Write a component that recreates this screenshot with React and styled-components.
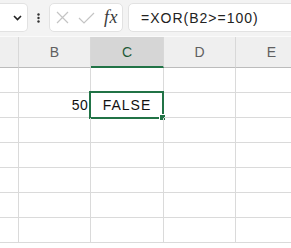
import { createGlobalStyle, styled } from "styled-components";

const GlobalStyle = createGlobalStyle`
  html, body {
    margin: 0;
    padding: 0;
    background: #ffffff;
    overflow: hidden;
  }
  body {
    font-family: "Liberation Sans", Arial, sans-serif;
  }
`;

const GREEN = "#217346";

const Page = styled.div`
  width: 291px;
  height: 248px;
  overflow: hidden;
  background: #fff;
`;

const Toolbar = styled.div`
  height: 37px;
  box-sizing: border-box;
  background: #f3f3f3;
  display: flex;
  align-items: center;
  padding-bottom: 1px;
  border-bottom: 1px solid #fafafa;
`;

const Box = styled.div`
  height: 29px;
  box-sizing: border-box;
  background: #fff;
  border: 1px solid #e2e2e2;
  border-radius: 5px;
  display: flex;
  align-items: center;
`;

const NameBox = styled(Box)`
  width: 28px;
  border-left: none;
  border-radius: 0 5px 5px 0;
  justify-content: flex-end;
  padding-right: 5px;
`;

const Dots = styled.div`
  width: 21px;
  display: flex;
  justify-content: center;
  color: #333;
`;

const EditBox = styled(Box)`
  width: 74px;
  padding-left: 6px;
  gap: 9px;
`;

const Fx = styled.span`
  font-family: "Liberation Serif", "Times New Roman", serif;
  font-style: italic;
  font-size: 18px;
  color: #3b3b3b;
  letter-spacing: 0.5px;
`;

const FormulaBox = styled(Box)`
  flex: 1;
  margin-left: 5px;
  margin-right: -10px;
  padding-left: 12px;
  font-size: 14px;
  color: #222;
  letter-spacing: 1px;
  border-radius: 5px 0 0 5px;
`;

const Sheet = styled.div`
  display: grid;
  grid-template-columns: 19px 72px 73px 72px 72px;
`;

const HeadCell = styled.div`
  height: 31px;
  box-sizing: border-box;
  background: ${(p) => (p.$active ? "#d6d6d6" : "#efefef")};
  border-right: 1px solid #d8d8d8;
  border-bottom: ${(p) => (p.$active ? `2px solid ${GREEN}` : "1px solid #bcbcbc")};
  display: flex;
  align-items: center;
  justify-content: center;
  font-size: 14px;
  color: ${(p) => (p.$active ? "#1f5a38" : "#606060")};
  padding-top: ${(p) => (p.$active ? "1px" : "0")};
`;

const Cell = styled.div`
  position: relative;
  height: 25px;
  box-sizing: border-box;
  border-right: 1px solid #dadada;
  border-bottom: 1px solid #dadada;
  display: flex;
  align-items: center;
  justify-content: ${(p) => p.$align || "flex-start"};
  padding: 0 2px;
  font-size: 14px;
  color: #111;
  letter-spacing: ${(p) => (p.$wide ? "1px" : "0.3px")};
`;

const Selection = styled.div`
  position: absolute;
  top: -2px;
  left: -2px;
  right: -1px;
  bottom: -2px;
  border: 2px solid ${GREEN};
  pointer-events: none;
`;

const Handle = styled.div`
  position: absolute;
  right: -4px;
  bottom: -4px;
  width: 5px;
  height: 5px;
  background: ${GREEN};
  border: 1px solid #fff;
`;

const Chevron = () => (
  <svg width="9" height="6" viewBox="0 0 9 6">
    <path d="M1 1 L4.5 4.5 L8 1" fill="none" stroke="#222" strokeWidth="1.6" />
  </svg>
);

const VDots = () => (
  <svg width="3" height="10" viewBox="0 0 3 10">
    <circle cx="1.5" cy="1.5" r="1.2" fill="#333" />
    <circle cx="1.5" cy="5" r="1.2" fill="#333" />
    <circle cx="1.5" cy="8.5" r="1.2" fill="#333" />
  </svg>
);

const Cross = () => (
  <svg width="13" height="13" viewBox="0 0 13 13">
    <path d="M1 1 L12 12 M12 1 L1 12" stroke="#c4c4c4" strokeWidth="1.2" fill="none" />
  </svg>
);

const Check = () => (
  <svg width="17" height="12" viewBox="0 0 17 12">
    <path d="M1 6 L6 11 L16 1" stroke="#c4c4c4" strokeWidth="1.2" fill="none" />
  </svg>
);

const cols = ["", "B", "C", "D", "E"];
const rows = [1, 2, 3, 4, 5, 6, 7];

const App = () => {
  return (
    <Page>
      <GlobalStyle />
      <Toolbar>
        <NameBox>
          <Chevron />
        </NameBox>
        <Dots>
          <VDots />
        </Dots>
        <EditBox>
          <Cross />
          <Check />
          <Fx>fx</Fx>
        </EditBox>
        <FormulaBox>=XOR(B2&gt;=100)</FormulaBox>
      </Toolbar>
      <Sheet>
        {cols.map((c) => (
          <HeadCell key={c || "A"} $active={c === "C"}>
            {c}
          </HeadCell>
        ))}
        {rows.map((r) =>
          cols.map((c) => {
            const key = `${c || "A"}${r}`;
            if (key === "B2") {
              return (
                <Cell key={key} $align="flex-end">
                  50
                </Cell>
              );
            }
            if (key === "C2") {
              return (
                <Cell key={key} $align="center" $wide>
                  FALSE
                  <Selection>
                    <Handle />
                  </Selection>
                </Cell>
              );
            }
            return <Cell key={key} />;
          })
        )}
      </Sheet>
    </Page>
  );
};

export default App;
